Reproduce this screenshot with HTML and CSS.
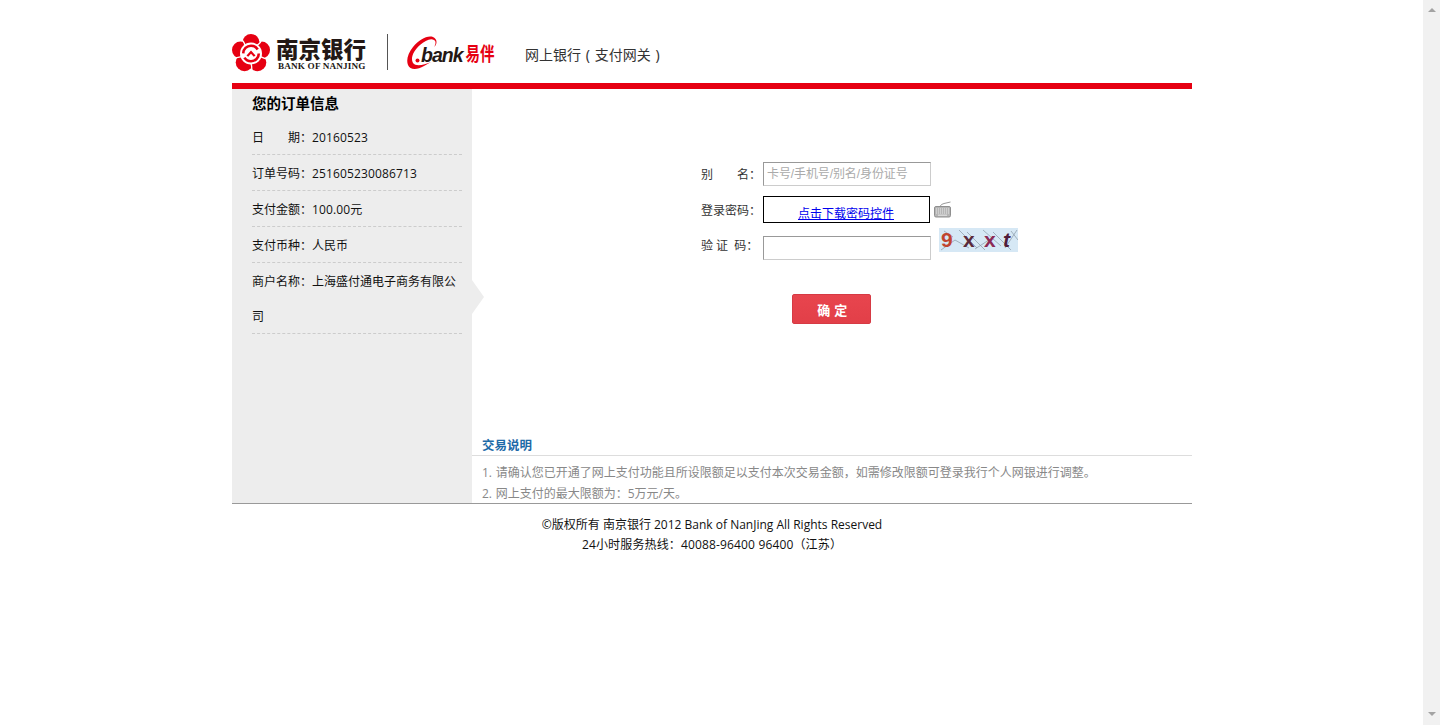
FILE: index.html
```html
<!DOCTYPE html>
<html lang="zh-CN">
<head>
<meta charset="utf-8">
<title>网上银行（支付网关）</title>
<link rel="stylesheet" href="styles.css">
</head>
<body>
<div class="viewport">
  <div class="wrap">
    <header class="header">
      <svg class="logo-bank" width="136" height="42" viewBox="0 -4 136 42" aria-label="南京银行">
        <g fill="#e60012">
          <circle cx="19" cy="8.500" r="8.500"/>
          <circle cx="29.500" cy="16.100" r="8.500"/>
          <circle cx="25.500" cy="28.400" r="8.800"/>
          <circle cx="12.500" cy="28.400" r="8.800"/>
          <circle cx="8.500" cy="16.100" r="8.500"/>
          <circle cx="19" cy="19.500" r="13"/>
        </g>
        <g stroke="#fff" stroke-width="1.300" fill="none">
          <path d="M24.900 11.400 Q29 9 30.800 3.300"/>
          <path d="M28.500 22.600 Q33 25 38 25.700"/>
          <path d="M19 29.500 Q20.500 34 19 39.500"/>
          <path d="M9.500 22.600 Q5 23 0 25.700"/>
          <path d="M13.100 11.400 Q12 7 7.200 3.300"/>
        </g>
        <circle cx="19" cy="19.500" r="11" fill="#fff"/>
        <circle cx="19" cy="19.500" r="7.800" fill="none" stroke="#e60012" stroke-width="2.600" stroke-dasharray="20 4.500"/>
        <path d="M14.500 21.500 L19 16.500 L23.500 21.500 L21.800 22.800 L19 19.800 L16.200 22.800 Z" fill="#e60012"/>
        <text class="logo-cn" x="44" y="23.500">南京银行</text>
        <text class="logo-en" x="46" y="35">BANK OF NANJING</text>
      </svg>
      <div class="logo-divider"></div>
      <svg class="logo-ebank" width="88" height="36" viewBox="0 0 88 36" aria-label="eBank易伴">
        <path d="M26 2 C20 0 12 5 6 12 C1 18 -1 25 1 30 C3 35 10 35 17 31 L24 27 C17 30 9 32 6 28 C3 23 7 15 13 10 C18 6 23 3 27 5 C29 6 29 9 27 12 C30 10 31 4 26 2 Z" fill="#e60012"/>
        <circle cx="10.500" cy="25.500" r="2" fill="#e60012"/>
        <text class="ebank-en" x="14" y="27">bank</text>
        <text class="ebank-cn" transform="translate(58.500 26) scale(1 1.350)">易伴</text>
      </svg>
      <div class="tagline">网上银行 ( 支付网关 )</div>
    </header>
    <div class="redbar"></div>

    <main class="content">
      <aside class="order">
        <h2 class="order-title">您的订单信息</h2>
        <div class="order-row">日　　期：<span class="num">20160523</span></div>
        <div class="order-row">订单号码：<span class="num">251605230086713</span></div>
        <div class="order-row">支付金额：<span class="num">100.00</span>元</div>
        <div class="order-row">支付币种：人民币</div>
        <div class="order-row">商户名称：上海盛付通电子商务有限公司</div>
        <span class="order-arrow"></span>
      </aside>

      <section class="pane">
        <form class="login">
          <div class="field field-alias">
            <label class="field-label">别　　名：</label>
            <input class="text-input" type="text" placeholder="卡号/手机号/别名/身份证号">
          </div>
          <div class="field field-pass">
            <label class="field-label">登录密码：</label>
            <div class="pass-box"><a class="pass-link" href="#">点击下载密码控件</a></div>
            <svg class="keyboard" width="17" height="17" viewBox="0 0 17 17">
              <path d="M6 5.500 Q7 3 10 2.500 L16.500 1" stroke="#999" fill="none"/>
              <rect x="0.500" y="5.500" width="16" height="10.500" rx="1.500" fill="#b5b5b5" stroke="#8f8f8f"/>
              <g stroke="#e8e8e8" stroke-dasharray="1 1">
                <path d="M2 8 H15"/><path d="M2 10 H15"/><path d="M2 12 H15"/>
              </g>
              <path d="M4 14.200 H13" stroke="#e8e8e8"/>
            </svg>
          </div>
          <div class="field field-code">
            <label class="field-label">验 证&nbsp;&nbsp;码：</label>
            <input class="text-input" type="text">
            <svg class="captcha" width="79" height="24" viewBox="0 0 79 24">
              <rect width="79" height="24" fill="#d6e8f5"/>
              <g stroke="#8a98a5" stroke-width="0.700" fill="none">
                <path d="M2 22 L16 12 L30 20"/><path d="M20 2 L38 20"/><path d="M28 4 L46 22"/><path d="M44 2 L62 18"/>
                <path d="M54 4 L72 22"/><path d="M66 20 L78 2"/><path d="M72 3 L79 12"/><path d="M36 21 L56 8"/><path d="M5 3 L14 9"/>
              </g>
              <text class="cap cap-nine" x="2" y="19">9</text>
              <text class="cap cap-x1" x="24" y="19">x</text>
              <text class="cap cap-x2" x="45" y="19">x</text>
              <text class="cap cap-t" x="64" y="19">t</text>
            </svg>
          </div>
          <button class="submit" type="button">确 定</button>
        </form>

        <div class="notes">
          <h3 class="notes-title">交易说明</h3>
          <ol class="notes-list">
            <li>1. 请确认您已开通了网上支付功能且所设限额足以支付本次交易金额，如需修改限额可登录我行个人网银进行调整。</li>
            <li>2. 网上支付的最大限额为：5万元/天。</li>
          </ol>
        </div>
      </section>
    </main>

    <footer class="footer">
      <p>©版权所有 南京银行 2012 Bank of NanJing All Rights Reserved</p>
      <p class="footer-hotline">24小时服务热线：40088-96400 96400（江苏）</p>
    </footer>
  </div>
  <div class="scrollbar">
    <span class="sb-up"></span>
    <span class="sb-down"></span>
  </div>
</div>
</body>
</html>
```
FILE: styles.css
```css
* { box-sizing: border-box; }
html, body { margin: 0; padding: 0; height: 100%; overflow: hidden; background: #fff; }
body { font-family: "Open Sans", "Noto Sans CJK SC", sans-serif; font-size: 12px; color: #111; }

.viewport { display: flex; height: 725px; }
.wrap { flex: 1; padding: 0 231px 0 232px; min-width: 0; }
.scrollbar { width: 17px; background: #f1f1f1; display: flex; flex-direction: column; justify-content: space-between; align-items: center; padding: 8px 0; }
.sb-up, .sb-down { width: 0; height: 0; border-left: 4px solid transparent; border-right: 4px solid transparent; }
.sb-up { border-bottom: 4px solid #a3a3a3; }
.sb-down { border-top: 4px solid #a3a3a3; margin-bottom: 1px; }

.header { height: 83px; padding-top: 30px; display: flex; align-items: flex-start; }
.logo-bank { display: block; }
.logo-divider { width: 1px; height: 36px; background: #555; margin: 4px 0 0 19px; }
.logo-ebank { display: block; margin-left: 19px; margin-top: 5px; }
.tagline { margin-left: 30px; font-size: 14px; line-height: 20px; margin-top: 15px; color: #333; word-spacing: 1.100px; font-family: "Noto Sans", "Noto Sans CJK SC", sans-serif; }

.logo-cn { font-family: "Noto Sans CJK SC", sans-serif; font-weight: 900; font-size: 22.500px; fill: #231815; }
.logo-en { font-family: "Liberation Serif", serif; font-weight: 700; font-size: 9.200px; letter-spacing: 0.15px; fill: #231815; }
.ebank-en { font-family: "Liberation Sans", sans-serif; font-weight: 700; font-style: italic; font-size: 19.500px; letter-spacing: -1px; fill: #231815; }
.ebank-cn { font-family: "Noto Sans CJK SC", sans-serif; font-weight: 700; font-size: 14.500px; fill: #e60012; }

.redbar { height: 6px; background: #e60012; }

.content { display: flex; height: 414px; }
.order { position: relative; width: 240px; background: #ededed; padding: 0 10px 0 20px; flex: none; }
.order-title { margin: 0; font-size: 14.500px; font-weight: 700; height: 30px; line-height: 30px; color: #000; }
.order-row { line-height: 35px; padding-top: 1px; color: #111; }
.order-row::after { content: ""; display: block; height: 0; margin-top: -1px; border-bottom: 1px dashed #ccc; }
.num { letter-spacing: 0.14px; }
.order-arrow { position: absolute; left: 240px; top: 191px; width: 0; height: 0; border-left: 12px solid #ededed; border-top: 17px solid transparent; border-bottom: 17px solid transparent; }

.pane { flex: 1; display: flex; flex-direction: column; min-width: 0; }
.login { padding: 73px 0 0 229px; }
.field { display: flex; align-items: flex-start; }
.field-label { width: 62px; flex: none; color: #333; }
.field-alias { height: 24px; margin-bottom: 10px; }
.field-alias .field-label { line-height: 26px; }
.field-pass { height: 27px; margin-bottom: 13px; }
.field-pass .field-label { line-height: 30px; }
.field-code { height: 24px; }
.field-code .field-label { line-height: 20px; }
.text-input { width: 168px; height: 24px; padding: 0 3px; border: 1px solid #ccc; border-top-color: #999; border-left-color: #999; background: #fff; font: 12px "Liberation Sans", "Noto Sans CJK SC", sans-serif; color: #333; outline: 0; border-radius: 0; }
.text-input::placeholder { color: #aaa; opacity: 1; letter-spacing: -0.1px; }
.pass-box { width: 167px; height: 27px; border: 1px solid #000; padding-right: 1px; text-align: center; line-height: 34px; background: #fff; }
.pass-link { color: #00e; text-decoration: underline; }
.keyboard { display: block; margin: 5px 0 0 4px; }
.captcha { display: block; margin: -8px 0 0 8px; }
.cap { font-family: "Liberation Sans", sans-serif; font-weight: 700; font-size: 21px; }
.cap-nine { fill: #c0452f; }
.cap-x1 { fill: #5a2a3a; }
.cap-x2 { fill: #8c2a55; }
.cap-t { fill: #4f1c3a; font-style: italic; }

.submit { display: block; margin: 34px 0 0 91px; width: 79px; height: 30px; padding: 1px 0 0 2px; border: 1px solid #d63a44; border-radius: 2px; background: linear-gradient(#e8454e, #e23f48); color: #fff; font: 700 13px/27px "Noto Sans CJK SC", sans-serif; letter-spacing: 0.5px; }

.notes { margin-top: auto; margin-bottom: -1px; }
.notes-title { margin: 0; padding-left: 10px; height: 21px; line-height: 22px; font-size: 12.500px; font-weight: 700; color: #1d6aa8; border-bottom: 1px solid #ddd; }
.notes-list { list-style: none; margin: 0; padding: 6px 0 0 10px; color: #888; line-height: 21px; word-spacing: 0.5px; }

.footer { position: relative; border-top: 1px solid #999; padding: 11px 0 0 0; text-align: center; color: #111; }
.footer p { margin: 0; line-height: 20px; }
.footer .footer-hotline { letter-spacing: 0.15px; }
```
